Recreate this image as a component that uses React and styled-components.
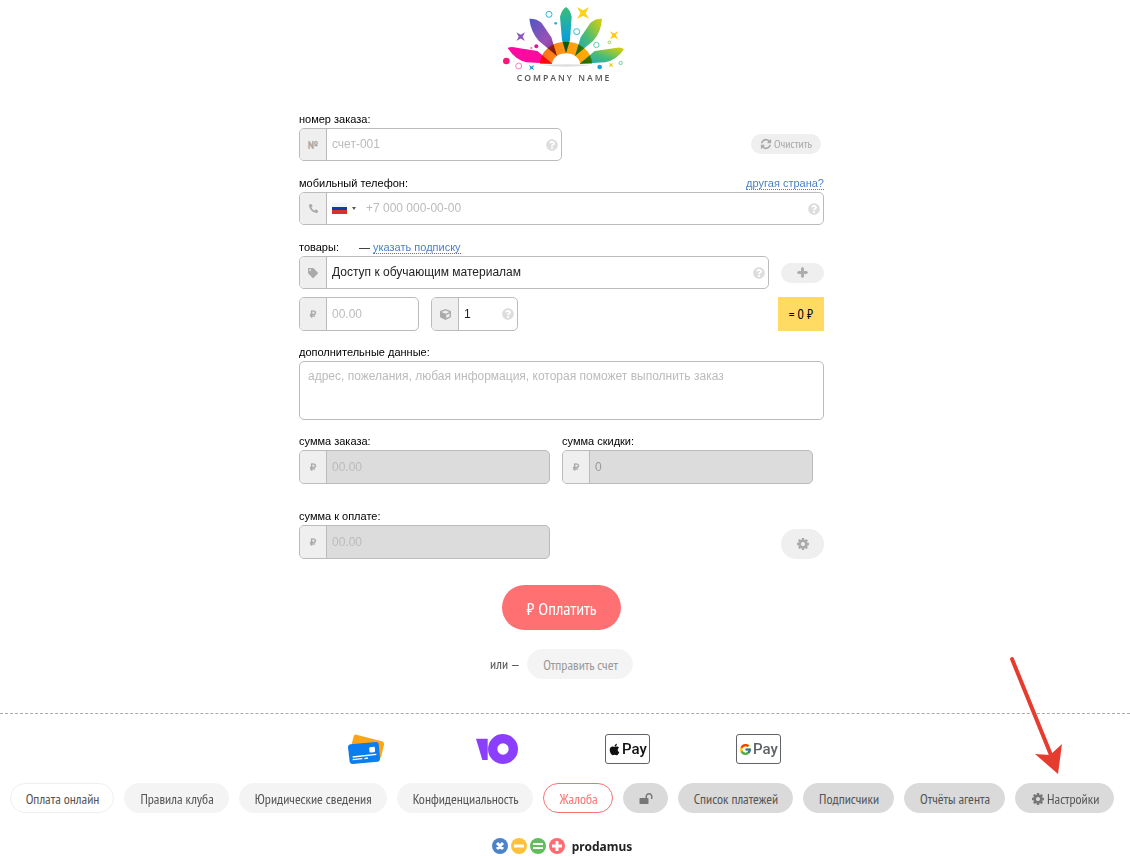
import styled, { createGlobalStyle } from "styled-components"
import { FaPhoneAlt, FaTag, FaCube, FaPlus, FaRubleSign, FaQuestionCircle, FaApple } from "react-icons/fa"
import { FcGoogle } from "react-icons/fc"

const narrow = `"PT Sans Narrow", "Liberation Sans Narrow", "Open Sans", sans-serif`

const GlobalStyle = createGlobalStyle`
* { box-sizing: border-box; }
body {
  margin: 0;
  background: #fff;
  color: #000;
  font-family: Arial, "Liberation Sans", sans-serif;
  font-size: 12px;
}
button, input, textarea { font: inherit; }
`

const Page = styled.div`
display: flex;
flex-direction: column;
overflow-x: hidden;
`

const Header = styled.header`
display: flex;
justify-content: center;
`

const Form = styled.form`
width: 100%;
max-width: 532px;
padding-right: 7px;
margin: 22px auto 34px;
align-self: center;
display: flex;
flex-direction: column;
`

const Row = styled.div`
display: flex;
align-items: flex-end;
justify-content: ${props => props.$between ? "space-between" : "flex-start"};
gap: 12px;
margin-top: ${props => props.$top || 0}px;
`

const Group = styled.div`
flex: ${props => props.$width ? `0 1 ${props.$width}px` : "1 1 0"};
min-width: 0;
`

const LabelRow = styled.div`
display: flex;
height: 16px;
line-height: 14px;
font-size: 11px;
justify-content: ${props => props.$between ? "space-between" : "flex-start"};
`

const Label = styled.label`
font-size: 11px;
`

const Hint = styled.span`
margin-left: 20px;
`

const DottedLink = styled.a`
color: #4a7fc4;
text-decoration: none;
border-bottom: 1px dotted #4a7fc4;
height: 14px;
`

const Field = styled.div`
display: flex;
height: ${props => props.$tall ? 34 : 33}px;
border: 1px solid #bbb;
border-radius: 5px;
overflow: hidden;
background: ${props => props.$disabled ? "#dcdcdc" : "#fff"};
`

const Addon = styled.span`
flex: 0 0 27px;
display: flex;
align-items: center;
justify-content: center;
background: #efefef;
border-right: 1px solid #bbb;
color: #aaa;
font: bold 12px ${narrow};
`

const Input = styled.input`
flex: 1;
min-width: 0;
width: 100%;
border: 0;
outline: 0;
padding: 0 5px ${props => props.$tall ? 0 : 2}px;
background: transparent;
color: #222;
&::placeholder { color: #bbb; opacity: 1; }
&:disabled { color: #999; }
`

const Help = styled.span`
display: flex;
align-items: center;
padding-right: 3px;
color: #ddd;
font-size: 12px;
`

const Country = styled.span`
display: flex;
align-items: center;
gap: 5px;
padding: 0 5px;
`

const Caret = styled.span`
border: 2px solid transparent;
border-top: 3px solid #555;
border-bottom: 0;
`

const Textarea = styled.textarea`
display: block;
width: 100%;
height: 59px;
padding: 7px 8px;
border: 1px solid #bbb;
border-radius: 5px;
outline: 0;
resize: none;
&::placeholder { color: #bbb; opacity: 1; }
`

const SoftButton = styled.button`
display: inline-flex;
align-items: center;
justify-content: center;
gap: 2px;
height: ${props => props.$height}px;
width: ${props => props.$width}px;
padding: 0;
border: 0;
border-radius: 15px;
background: #efefef;
color: #aaa;
font: 12px ${narrow};
white-space: nowrap;
`

// keeps the small round buttons centred on the field beside them
const ButtonSlot = styled.div`
display: flex;
align-items: center;
height: 33px;
`

const ClearSlot = styled(ButtonSlot)`
padding: 0 3px 2px 0;
`

const Total = styled.output`
display: flex;
align-items: center;
justify-content: center;
width: 46px;
height: 34px;
margin-left: auto;
background: #ffdb64;
font: 14px ${narrow};
white-space: nowrap;
`

const PayButton = styled.button`
align-self: center;
height: 45px;
width: 119px;
margin-top: 26px;
padding: 2px 0 0;
border: 0;
border-radius: 23px;
background: #ff7072;
color: #fff;
font: 18px ${narrow};
white-space: nowrap;
`

const Alternative = styled.div`
display: flex;
align-items: center;
justify-content: center;
gap: 7px;
margin-top: 19px;
color: #555;
font: 14px ${narrow};
`

const Footer = styled.footer`
border-top: 1px dashed #aaa;
padding: 20px 6px 5px 0;
display: flex;
flex-direction: column;
align-items: center;
`

const Payments = styled.div`
display: flex;
`

const Payment = styled.div`
width: 131px;
height: 30px;
display: flex;
justify-content: center;
`

const Badge = styled.span`
display: flex;
align-items: center;
justify-content: center;
gap: 1px;
width: 45px;
height: 30px;
border: 1px solid #5f6368;
border-radius: 3px;
color: ${props => props.$color};
font: 500 15px Roboto, sans-serif;
`

const Nav = styled.nav`
display: flex;
flex-wrap: wrap;
justify-content: center;
gap: 10px;
margin-top: 19px;
`

const tones = {
  outline: "background: #fff; border-color: #eee; color: #555;",
  light: "background: #f4f4f4; border-color: #f4f4f4; color: #555;",
  danger: "background: #fff; border-color: #ff7072; color: #ff7072;",
  dark: "background: #dadada; border-color: #dadada; color: #555;",
}

const Pill = styled.a`
position: relative;
display: inline-flex;
align-items: center;
gap: 2px;
height: 30px;
padding: 2px 14px 0 15px;
border: 1px solid;
border-radius: 15px;
font: 14px ${narrow};
text-decoration: none;
white-space: nowrap;
${props => tones[props.$tone]}
`

const SendButton = styled(Pill)`
color: #999;
`

const Pointer = styled.svg`
position: absolute;
left: -8px;
bottom: 36px;
pointer-events: none;
`

const Brand = styled.a`
display: flex;
align-items: center;
gap: 6px;
height: 18px;
margin-top: 24px;
color: #222;
font: bold 12px "Noto Sans", sans-serif;
text-decoration: none;
`

const cogPath = "M1152 896q0-106-75-181t-181-75-181 75-75 181 75 181 181 75 181-75 75-181zm512-109v222q0 12-8 23t-20 13l-185 28q-19 54-39 91 35 50 107 138 10 12 10 25t-9 23q-27 37-99 108t-94 71q-12 0-26-9l-138-108q-44 23-91 38-16 136-29 186-7 28-36 28h-222q-14 0-24.500-8.500t-11.500-21.500l-28-184q-49-16-90-37l-141 107q-10 9-25 9-14 0-25-11-126-114-165-168-7-10-7-23 0-12 8-23 15-21 51-66.500t54-70.500q-27-50-41-99l-183-27q-13-2-21-12.500t-8-23.500v-222q0-12 8-23t19-13l186-28q14-46 39-92-40-57-107-138-10-12-10-24 0-10 9-23 26-36 98.500-107.500t94.500-71.500q13 0 26 10l138 107q44-23 91-38 16-136 29-186 7-28 36-28h222q14 0 24.500 8.500t11.500 21.500l28 184q49 16 90 37l142-107q9-9 24-9 13 0 25 10 129 119 165 170 7 8 7 22 0 12-8 23-15 21-51 66.500t-54 70.500q26 50 41 98l183 28q13 2 21 12.500t8 23.500z"
const refreshPath = "M1639 1056q0 5-1 7-64 268-268 434.500t-478 166.500q-146 0-282.500-55t-243.500-157l-129 129q-19 19-45 19t-45-19-19-45v-448q0-26 19-45t45-19h448q26 0 45 19t19 45-19 45l-137 137q71 66 161 102t187 36q134 0 250-65t186-179q11-17 53-117 8-23 30-23h192q13 0 22.500 9.500t9.500 22.500zm25-800v448q0 26-19 45t-45 19h-448q-26 0-45-19t-19-45 19-45l138-138q-148-137-349-137-134 0-250 65t-186 179q-11 17-53 117-8 23-30 23h-199q-13 0-22.500-9.500t-9.500-22.500v-7q65-268 270-434.500t480-166.500q146 0 284 55.500t245 156.500l130-129q19-19 45-19t45 19 19 45z"
const unlockPath = "M1728 576v256q0 26-19 45t-45 19h-64q-26 0-45-19t-19-45v-256q0-106-75-181t-181-75-181 75-75 181v192h96q40 0 68 28t28 68v576q0 40-28 68t-68 28h-960q-40 0-68-28t-28-68v-576q0-40 28-68t68-28h672v-192q0-185 131.500-316.500t316.500-131.500 316.500 131.500 131.500 316.500z"

const Glyph = ({ d, size = 14, color = "currentColor" }) => (
    <svg width={size} height={size} viewBox="0 0 1792 1792" fill={color} aria-hidden="true"><path d={d} /></svg>
)

const star = (x, y, r) => {
    const k = r * 0.45
    return `M${x - r} ${y - r}L${x} ${y - k}L${x + r} ${y - r}L${x + k} ${y}L${x + r} ${y + r}L${x} ${y + k}L${x - r} ${y + r}L${x - k} ${y}Z`
}

const Logo = () => (
    <svg width="150" height="90" viewBox="0 0 450 270" role="img" aria-label="Company name">
        <defs>
            <linearGradient id="violet" x1="0" y1="0" x2="1" y2="1"><stop stopColor="#4d58c4" /><stop offset="0.6" stopColor="#9b50b5" /><stop offset="1" stopColor="#7b2a8c" /></linearGradient>
            <linearGradient id="teal" x1="0" y1="0" x2="0" y2="1"><stop stopColor="#3bbf74" /><stop offset="0.6" stopColor="#0fa3d0" /><stop offset="1" stopColor="#0b8fd0" /></linearGradient>
            <linearGradient id="lime" x1="1" y1="0" x2="0" y2="1"><stop stopColor="#e2cf00" /><stop offset="0.5" stopColor="#4dbd74" /><stop offset="1" stopColor="#0fa3c8" /></linearGradient>
            <linearGradient id="sun" x1="0" y1="0" x2="1" y2="0"><stop stopColor="#ff6a1f" /><stop offset="0.5" stopColor="#ff9a10" /><stop offset="1" stopColor="#ffae00" /></linearGradient>
        </defs>
        <path d="M53 144Q62 139 80 143L142 153L187 191L110 187Q76 180 53 144Z" fill="#ff0aa0" />
        <path d="M118 56Q140 55 155 69L184 112L201 168L146 122Q122 94 118 56Z" fill="url(#violet)" />
        <path d="M228 21Q240 28 245 50L240 120L228 160L216 120L210 50Q216 28 228 21Z" fill="url(#teal)" />
        <path d="M336 56Q316 55 301 69L272 112L255 168L310 122Q334 94 336 56Z" fill="url(#lime)" />
        <path d="M402 148Q394 140 376 144L314 153L269 191L346 187Q380 180 402 148Z" fill="url(#lime)" />
        <path d="M150 192A78 67 0 0 1 306 192H270A42 32 0 0 0 186 192Z" fill="url(#sun)" style={{ mixBlendMode: "multiply" }} />
        <path d="M152 195Q228 191 304 195Q228 206 152 195Z" fill="#ddd" />
        <path d={star(279, 39, 18)} fill="#ffd21a" />
        <path d={star(372, 106, 12)} fill="#ffcb12" />
        <path d={star(92, 110, 13)} fill="#8a55ba" />
        <path d={star(125, 203, 8)} fill="#16a0d8" />
        <path d={star(363, 195, 7)} fill="#f0cd1a" />
        <circle cx="49" cy="183" r="10" fill="#ff1478" />
        <circle cx="139" cy="139" r="6" fill="#e015a5" />
        <circle cx="124" cy="144" r="3" fill="#e96cc0" />
        <circle cx="197" cy="70" r="4" fill="#20b0d8" />
        <circle cx="329" cy="201" r="7" fill="#16a5d8" />
        <g fill="none" strokeWidth="3">
            <circle cx="86" cy="198" r="9" stroke="#ff7ac0" />
            <circle cx="177" cy="43" r="9" stroke="#30b5d0" />
            <circle cx="260" cy="95" r="9" stroke="#30bdc8" />
            <circle cx="319" cy="135" r="8" stroke="#62cfb0" />
            <circle cx="358" cy="127" r="4" stroke="#9bd060" />
            <circle cx="392" cy="189" r="5" stroke="#70d0a0" />
        </g>
        <text x="80" y="242" fontFamily="'Open Sans', sans-serif" fontWeight="600" fontSize="26" letterSpacing="6" fill="#555">COMPANY NAME</text>
    </svg>
)

const Flag = () => (
    <svg width="15" height="11" viewBox="0 0 15 11" aria-label="Россия">
        <path d="M0 0h15v4H0z" fill="#f4f4f4" />
        <path d="M0 4h15v4H0z" fill="#0d3bab" />
        <path d="M0 7h15v4H0z" fill="#d8302c" />
    </svg>
)

const Cards = () => (
    <svg width="36" height="30" viewBox="0 0 108 90" aria-label="Банковские карты">
        <path d="M25 2Q19 0 17 7L10 34L94 74L99 70L108 32Q109 24 101 22Z" fill="#ffa512" />
        <path d="M8 31L84 24Q91 24 92 31L96 74Q96 82 88 83L14 90Q6 90 5 83L0 40Q0 32 8 31Z" fill="#0a7df0" />
        <rect x="64" y="39" width="17" height="16" rx="3" fill="#fff" transform="rotate(-5 72 47)" />
        <path d="M14 69L85 61M14 77L43 74M49 74L60 72" stroke="#fff" strokeWidth="4" />
    </svg>
)

const YooMoney = () => (
    <svg width="42" height="30" viewBox="0 0 126 90" aria-label="ЮMoney">
        <path d="M0 14H35V78H19Z" fill="#8b3ffd" />
        <circle cx="81" cy="45" r="31" fill="none" stroke="#8b3ffd" strokeWidth="28" />
    </svg>
)

const BrandMarks = () => (
    <svg width="74" height="16" viewBox="0 0 74 16" aria-hidden="true" strokeWidth="3" stroke="#fff">
        <g stroke="none">
            <circle cx="8" cy="8" r="8" fill="#4c83c8" /><circle cx="27" cy="8" r="8" fill="#ffc13b" />
            <circle cx="46" cy="8" r="8" fill="#62bd5b" /><circle cx="65" cy="8" r="8" fill="#ff6b70" />
        </g>
        <path d="M5 5L11 11M11 5L5 11M22 8H32M60 8H70M65 3V13" />
        <path d="M41 6H51M41 10H51" strokeWidth="2" />
    </svg>
)

const links = [
    { text: "Оплата онлайн", tone: "outline" },
    { text: "Правила клуба", tone: "light" },
    { text: "Юридические сведения", tone: "light" },
    { text: "Конфиденциальность", tone: "light" },
    { text: "Жалоба", tone: "danger" },
    { icon: unlockPath, label: "Войти", tone: "dark" },
    { text: "Список платежей", tone: "dark" },
    { text: "Подписчики", tone: "dark" },
    { text: "Отчёты агента", tone: "dark" },
    { text: "Настройки", icon: cogPath, tone: "dark", pointed: true },
]

const MoneyField = props => (
    <Field $tall $disabled={props.disabled}>
        <Addon><FaRubleSign size={8} strokeWidth={15} /></Addon>
        <Input $tall {...props} />
    </Field>
)

const App = () => {
    return (
        <Page>
            <GlobalStyle />
            <Header><Logo /></Header>
            <Form onSubmit={e => e.preventDefault()}>
                <Row $between>
                    <Group $width={263}>
                        <LabelRow><Label htmlFor="order">номер заказа:</Label></LabelRow>
                        <Field>
                            <Addon>№</Addon>
                            <Input id="order" placeholder="счет-001" />
                            <Help><FaQuestionCircle /></Help>
                        </Field>
                    </Group>
                    <ClearSlot>
                        <SoftButton type="reset" $height={20} $width={70}><Glyph d={refreshPath} size={12} />Очистить</SoftButton>
                    </ClearSlot>
                </Row>

                <Row $top={15}>
                    <Group>
                        <LabelRow $between>
                            <Label htmlFor="phone">мобильный телефон:</Label>
                            <DottedLink href="#country">другая страна?</DottedLink>
                        </LabelRow>
                        <Field>
                            <Addon><FaPhoneAlt size={9} /></Addon>
                            <Country><Flag /><Caret /></Country>
                            <Input id="phone" type="tel" placeholder="+7 000 000-00-00" />
                            <Help><FaQuestionCircle /></Help>
                        </Field>
                    </Group>
                </Row>

                <Row $top={15}>
                    <Group>
                        <LabelRow>
                            <Label htmlFor="product">товары:</Label>
                            <Hint>— <DottedLink href="#subscription">указать подписку</DottedLink></Hint>
                        </LabelRow>
                        <Field>
                            <Addon><FaTag size={10} /></Addon>
                            <Input id="product" defaultValue="Доступ к обучающим материалам" />
                            <Help><FaQuestionCircle /></Help>
                        </Field>
                    </Group>
                    <ButtonSlot>
                        <SoftButton type="button" $height={20} $width={43} aria-label="Добавить товар"><FaPlus size={11} strokeWidth={40} /></SoftButton>
                    </ButtonSlot>
                </Row>
                <Row $top={8}>
                    <Group $width={120}><MoneyField id="price" placeholder="00.00" aria-label="Цена" /></Group>
                    <Group $width={87}>
                        <Field $tall>
                            <Addon><FaCube size={11} /></Addon>
                            <Input $tall id="count" defaultValue="1" aria-label="Количество" />
                            <Help><FaQuestionCircle /></Help>
                        </Field>
                    </Group>
                    <Total>= 0 ₽</Total>
                </Row>

                <Row $top={14}>
                    <Group>
                        <LabelRow><Label htmlFor="extra">дополнительные данные:</Label></LabelRow>
                        <Textarea id="extra" placeholder="адрес, пожелания, любая информация, которая поможет выполнить заказ" />
                    </Group>
                </Row>

                <Row $top={14}>
                    <Group $width={251}>
                        <LabelRow><Label htmlFor="sum">сумма заказа:</Label></LabelRow>
                        <MoneyField id="sum" placeholder="00.00" disabled />
                    </Group>
                    <Group $width={251}>
                        <LabelRow><Label htmlFor="discount">сумма скидки:</Label></LabelRow>
                        <MoneyField id="discount" defaultValue="0" disabled />
                    </Group>
                </Row>

                <Row $top={25} $between>
                    <Group $width={251}>
                        <LabelRow><Label htmlFor="total">сумма к оплате:</Label></LabelRow>
                        <MoneyField id="total" placeholder="00.00" disabled />
                    </Group>
                    <SoftButton type="button" $height={30} $width={43} aria-label="Настройки оплаты"><Glyph d={cogPath} /></SoftButton>
                </Row>

                <PayButton type="submit">₽ Оплатить</PayButton>
                <Alternative>
                    или —
                    <SendButton as="button" type="button" $tone="light">Отправить счет</SendButton>
                </Alternative>
            </Form>

            <Footer>
                <Payments>
                    <Payment><Cards /></Payment>
                    <Payment><YooMoney /></Payment>
                    <Payment><Badge $color="#111"><FaApple size={13} />Pay</Badge></Payment>
                    <Payment><Badge $color="#5f6368"><FcGoogle size={13} />Pay</Badge></Payment>
                </Payments>
                <Nav>
                    {links.map(link => (
                        <Pill key={link.text || link.label} href="#" $tone={link.tone} aria-label={link.label}>
                            {link.icon && <Glyph d={link.icon} color="#777" />}
                            {link.text}
                            {link.pointed && (
                                <Pointer width="58" height="122" viewBox="0 0 58 122" aria-hidden="true">
                                    <path d="M4 5L45 106" stroke="#e63c30" strokeWidth="4" strokeLinecap="round" />
                                    <path d="M27 100L42 101L54 90L50 120Z" fill="#e63c30" />
                                </Pointer>
                            )}
                        </Pill>
                    ))}
                </Nav>
                <Brand href="#"><BrandMarks />prodamus</Brand>
            </Footer>
        </Page>
    )
}

export default App
